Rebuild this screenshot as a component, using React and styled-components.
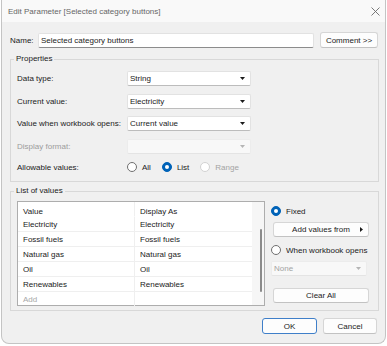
import React from "react";
import styled, { createGlobalStyle } from "styled-components";

const GlobalStyle = createGlobalStyle`
  html, body {
    margin: 0;
    background: #ffffff;
  }
  body {
    font-family: "Liberation Sans", Arial, sans-serif;
    font-size: 8px;
    color: #1b1b1b;
  }
  * {
    box-sizing: border-box;
  }
`;

const Window = styled.div`
  width: 385px;
  height: 344px;
  margin-left: 1px;
  border: 1px solid #c4c4c4;
  border-top: none;
  border-radius: 0 0 8px 8px;
  background: #f0f0f0;
  display: flex;
  flex-direction: column;
  overflow: hidden;
`;

const TitleBar = styled.div`
  height: 22px;
  flex: none;
  background: #f9f9f9;
  display: flex;
  align-items: center;
  justify-content: space-between;
  padding: 0 5px 0 6px;
`;

const Title = styled.span`
  color: #666666;
`;

const Body = styled.div`
  display: flex;
  flex-direction: column;
  padding: 10px 6px 0 8px;
`;

const NameRow = styled.div`
  display: flex;
  align-items: center;
  height: 16px;
  margin-right: 1px;
`;

const NameLabel = styled.span`
  width: 28px;
  flex: none;
`;

const TextInput = styled.div`
  flex: 1;
  height: 15px;
  display: flex;
  align-items: center;
  padding-left: 2px;
  background: #ffffff;
  border: 1px solid #e2e2e2;
  border-bottom-color: #8c8c8c;
  border-radius: 2px;
`;

const Button = styled.div`
  width: ${(p) => p.$width || 96}px;
  height: ${(p) => p.$height || 15}px;
  margin-left: ${(p) => p.$ml || 0}px;
  margin-top: ${(p) => p.$mt || 0}px;
  flex: none;
  display: flex;
  align-items: center;
  justify-content: center;
  position: relative;
  background: #fdfdfd;
  border: 1px solid ${(p) => (p.$primary ? "#3f7fc9" : "#d6d6d6")};
  border-bottom-color: ${(p) => (p.$primary ? "#3f7fc9" : "#c2c2c2")};
  border-radius: 3px;
  color: #1b1b1b;
`;

const ButtonArrow = styled.svg`
  position: absolute;
  right: 5px;
  top: 4px;
`;

const Group = styled.fieldset`
  margin: ${(p) => p.$mt || 0}px 0 0;
  border: 1px solid #d8d8d8;
  border-radius: 0;
  padding: ${(p) => p.$pad};
  min-width: 0;
`;

const Legend = styled.legend`
  padding: 0 2px;
  margin-left: -3px;
  line-height: 10px;
  color: #1b1b1b;
`;

const FormRow = styled.div`
  display: flex;
  align-items: center;
  height: ${(p) => p.$height || 15}px;
  margin-top: ${(p) => p.$mt || 0}px;
`;

const FieldLabel = styled.span`
  width: 110px;
  flex: none;
  color: ${(p) => (p.$disabled ? "#9c9c9c" : "#1b1b1b")};
`;

const SelectBox = styled.div`
  width: ${(p) => p.$width || 124}px;
  height: 15px;
  margin-top: ${(p) => p.$mt || 0}px;
  flex: none;
  display: flex;
  align-items: center;
  justify-content: space-between;
  padding: 0 5px 0 2px;
  background: ${(p) => (p.$disabled ? "#f8f8f8" : "#ffffff")};
  border: 1px solid ${(p) => (p.$disabled ? "#ececec" : "#e2e2e2")};
  border-bottom-color: ${(p) => (p.$disabled ? "#e4e4e4" : "#bcbcbc")};
  border-radius: 2px;
  color: ${(p) => (p.$disabled ? "#a3a3a3" : "#1b1b1b")};
`;

const RadioLine = styled.div`
  display: flex;
  align-items: center;
  gap: ${(p) => p.$gap || 0}px;
  margin-top: ${(p) => p.$mt || 0}px;
`;

const RadioItem = styled.label`
  display: flex;
  align-items: center;
  gap: 5px;
  height: 12px;
  color: ${(p) => (p.$disabled ? "#a3a3a3" : "#1b1b1b")};
`;

const RadioDot = styled.span`
  width: 10px;
  height: 10px;
  flex: none;
  border-radius: 50%;
  background: ${(p) => (p.$checked ? "#0063b8" : "#ffffff")};
  border: 1px solid
    ${(p) => (p.$checked ? "#0063b8" : p.$disabled ? "#d2d2d2" : "#6f6f6f")};
  display: flex;
  align-items: center;
  justify-content: center;

  &::after {
    content: "";
    display: ${(p) => (p.$checked ? "block" : "none")};
    width: 4px;
    height: 4px;
    border-radius: 50%;
    background: #ffffff;
  }
`;

const ListArea = styled.div`
  display: flex;
  gap: 6px;
`;

const Table = styled.div`
  width: 248px;
  height: 105px;
  flex: none;
  display: flex;
  background: #ffffff;
  border: 1px solid #adadad;
`;

const Grid = styled.div`
  flex: 1;
  display: grid;
  grid-template-columns: 117px 1fr;
  grid-auto-rows: 15px;
  align-content: start;
`;

const Cell = styled.div`
  display: flex;
  align-items: ${(p) => (p.$head ? "flex-end" : "center")};
  padding: 0 0 0 5px;
  border-bottom: 1px solid ${(p) => (p.$head ? "transparent" : "#efefef")};
  border-right: ${(p) => (p.$first ? "1px solid #efefef" : "none")};
  color: ${(p) => (p.$muted ? "#a8a8a8" : "#1b1b1b")};
`;

const ScrollTrack = styled.div`
  width: 12px;
  flex: none;
  background: #f6f6f6;
  display: flex;
  justify-content: flex-end;
  padding: 27px 2px 0 0;
`;

const ScrollThumb = styled.div`
  width: 2px;
  height: 63px;
  border-radius: 1px;
  background: #8a8a8a;
`;

const SidePanel = styled.div`
  display: flex;
  flex-direction: column;
  padding-top: 4px;
`;

const Footer = styled.div`
  display: flex;
  justify-content: flex-end;
  gap: 6px;
  margin-top: 7px;
  padding-right: 2px;
`;

const DownArrow = ({ color = "#1b1b1b" }) => (
  <svg width="5" height="3" viewBox="0 0 5 3">
    <path d="M0 0 L5 0 L2.5 3 Z" fill={color} />
  </svg>
);

const Select = ({ value, disabled, width, mt }) => (
  <SelectBox $disabled={disabled} $width={width} $mt={mt}>
    <span>{value}</span>
    <DownArrow color={disabled ? "#b5b5b5" : "#1b1b1b"} />
  </SelectBox>
);

const Radio = ({ label, checked, disabled }) => (
  <RadioItem $disabled={disabled}>
    <RadioDot $checked={checked} $disabled={disabled} />
    {label}
  </RadioItem>
);

const values = ["Electricity", "Fossil fuels", "Natural gas", "Oil", "Renewables"];

export default function App() {
  return (
    <>
      <GlobalStyle />
      <Window>
        <TitleBar>
          <Title>Edit Parameter [Selected category buttons]</Title>
          <svg width="9" height="9" viewBox="0 0 9 9">
            <path d="M0.5 0.5 L8.5 8.5 M8.5 0.5 L0.5 8.5" stroke="#6a6a6a" strokeWidth="0.9" />
          </svg>
        </TitleBar>
        <Body>
          <NameRow>
            <NameLabel>Name:</NameLabel>
            <TextInput>Selected category buttons</TextInput>
            <Button $width={58} $height={16} $ml={6}>
              Comment &gt;&gt;
            </Button>
          </NameRow>

          <Group $mt={6} $pad="7px 0 8px 6px">
            <Legend>Properties</Legend>
            <FormRow>
              <FieldLabel>Data type:</FieldLabel>
              <Select value="String" />
            </FormRow>
            <FormRow $mt={7.5}>
              <FieldLabel>Current value:</FieldLabel>
              <Select value="Electricity" />
            </FormRow>
            <FormRow $mt={7.5}>
              <FieldLabel>Value when workbook opens:</FieldLabel>
              <Select value="Current value" />
            </FormRow>
            <FormRow $mt={7.5}>
              <FieldLabel $disabled>Display format:</FieldLabel>
              <Select value="" disabled />
            </FormRow>
            <FormRow $mt={7.5} $height={12}>
              <FieldLabel>Allowable values:</FieldLabel>
              <RadioLine $gap={11}>
                <Radio label="All" />
                <Radio label="List" checked />
                <Radio label="Range" disabled />
              </RadioLine>
            </FormRow>
          </Group>

          <Group $mt={4} $pad="5px 0 4px 6px">
            <Legend>List of values</Legend>
            <ListArea>
              <Table>
                <Grid>
                  <Cell $head $first>Value</Cell>
                  <Cell $head>Display As</Cell>
                  {values.map((v) => (
                    <React.Fragment key={v}>
                      <Cell $first>{v}</Cell>
                      <Cell>{v}</Cell>
                    </React.Fragment>
                  ))}
                  <Cell $first $muted>Add</Cell>
                  <Cell />
                </Grid>
                <ScrollTrack>
                  <ScrollThumb />
                </ScrollTrack>
              </Table>
              <SidePanel>
                <RadioLine>
                  <Radio label="Fixed" checked />
                </RadioLine>
                <Button $ml={2} $mt={5}>
                  Add values from
                  <ButtonArrow width="3" height="5" viewBox="0 0 3 5">
                    <path d="M0 0 L3 2.5 L0 5 Z" fill="#1b1b1b" />
                  </ButtonArrow>
                </Button>
                <RadioLine $mt={7}>
                  <Radio label="When workbook opens" />
                </RadioLine>
                <Select value="None" disabled width={96} mt={5} />
                <Button $ml={2} $mt={12}>
                  Clear All
                </Button>
              </SidePanel>
            </ListArea>
          </Group>

          <Footer>
            <Button $primary $width={55} $height={16}>
              OK
            </Button>
            <Button $width={54} $height={16}>
              Cancel
            </Button>
          </Footer>
        </Body>
      </Window>
    </>
  );
}
